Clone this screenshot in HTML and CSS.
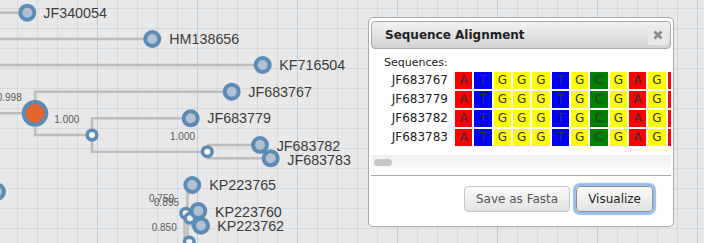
FILE: index.html
```html
<!DOCTYPE html>
<html>
<head>
<meta charset="utf-8">
<title>Sequence Alignment</title>
<link rel="stylesheet" href="styles.css">
</head>
<body>
<div class="stage">
  <svg class="tree" width="704" height="243" viewBox="0 0 704 243">
    <g class="links">
      <path d="M0 12.7H27"/>
      <path d="M0 39H152"/>
      <path d="M0 65H263"/>
      <path d="M0 113.3H35"/>
      <path d="M232 91.7H35V135H92"/>
      <path d="M191 118.3H92V151.7H207"/>
      <path d="M260 145H208V158.3H271"/>
      <path d="M192 185H187.5V243"/>
      <path d="M184.5 213V243"/>
      <path d="M198 211H186"/>
      <path d="M201 225.7H190"/>
    </g>
    <g class="leaf">
      <circle cx="-3" cy="191.7" r="7"/>
      <circle cx="27.3" cy="12.7" r="7"/>
      <circle cx="152.3" cy="39" r="7"/>
      <circle cx="262.7" cy="65" r="7"/>
      <circle cx="231.7" cy="91.7" r="7"/>
      <circle cx="190.7" cy="118.3" r="7"/>
      <circle cx="260" cy="145" r="7"/>
      <circle cx="270.7" cy="158.3" r="7"/>
      <circle cx="192.3" cy="185" r="7"/>
    </g>
    <g class="inner">
      <circle cx="92" cy="135" r="4.8"/>
      <circle cx="207.3" cy="151.7" r="4.8"/>
      <circle cx="185.7" cy="213.3" r="4.8"/>
      <circle cx="190" cy="218.3" r="4.8"/>
      <circle cx="189.3" cy="242" r="4.8"/>
    </g>
    <g class="leaf">
      <circle cx="198.3" cy="211" r="7"/>
      <circle cx="201" cy="225.7" r="7"/>
    </g>
    <circle class="root" cx="35" cy="113.3" r="11.3"/>
    <g class="label">
      <text x="43.3" y="17.7">JF340054</text>
      <text x="169.3" y="44">HM138656</text>
      <text x="279.3" y="70">KF716504</text>
      <text x="248.3" y="96.7">JF683767</text>
      <text x="207.3" y="123.3">JF683779</text>
      <text x="276.7" y="150.7">JF683782</text>
      <text x="287.3" y="165">JF683783</text>
      <text x="209.3" y="190">KP223765</text>
      <text x="215" y="217.3">KP223760</text>
      <text x="217.3" y="230.7">KP223762</text>
    </g>
    <g class="support">
      <text x="-3.3" y="101.3">0.998</text>
      <text x="54.3" y="122.6">1.000</text>
      <text x="170" y="140.3">1.000</text>
      <text x="149" y="202">0.750</text>
      <text x="154" y="206">0.895</text>
      <text x="151.7" y="231.3">0.850</text>
    </g>
  </svg>

  <div class="dialog">
    <div class="titlebar">
      <span class="title">Sequence Alignment</span>
      <button class="close" aria-label="close">
        <svg width="10" height="10" viewBox="0 0 10 10"><path d="M1.5 1.5L8.5 8.5M8.5 1.5L1.5 8.5"/></svg>
      </button>
    </div>
    <div class="content">
      <div class="scroll">
        <div class="hdr">Sequences:</div>
        <div class="rows">
          <div class="row"><span class="name">JF683767</span><div class="cells"><span class="c A">A</span><span class="c T">T</span><span class="c G">G</span><span class="c G">G</span><span class="c G">G</span><span class="c T">T</span><span class="c G">G</span><span class="c C">C</span><span class="c G">G</span><span class="c A">A</span><span class="c G">G</span><span class="c A">A</span></div></div>
          <div class="row"><span class="name">JF683779</span><div class="cells"><span class="c A">A</span><span class="c T">T</span><span class="c G">G</span><span class="c G">G</span><span class="c G">G</span><span class="c T">T</span><span class="c G">G</span><span class="c C">C</span><span class="c G">G</span><span class="c A">A</span><span class="c G">G</span><span class="c A">A</span></div></div>
          <div class="row"><span class="name">JF683782</span><div class="cells"><span class="c A">A</span><span class="c T">T</span><span class="c G">G</span><span class="c G">G</span><span class="c G">G</span><span class="c T">T</span><span class="c G">G</span><span class="c C">C</span><span class="c G">G</span><span class="c A">A</span><span class="c G">G</span><span class="c A">A</span></div></div>
          <div class="row"><span class="name">JF683783</span><div class="cells"><span class="c A">A</span><span class="c T">T</span><span class="c G">G</span><span class="c G">G</span><span class="c G">G</span><span class="c T">T</span><span class="c G">G</span><span class="c C">C</span><span class="c G">G</span><span class="c A">A</span><span class="c G">G</span><span class="c A">A</span></div></div>
        </div>
        <div class="track"><div class="thumb"></div></div>
      </div>
    </div>
    <div class="buttonpane">
      <button class="btn">Save as Fasta</button>
      <button class="btn focus">Visualize</button>
    </div>
  </div>
</div>
</body>
</html>
```

FILE: styles.css
```css
html, body {
  margin: 0;
  padding: 0;
}
body {
  width: 704px;
  height: 243px;
  overflow: hidden;
  font-family: "DejaVu Sans", sans-serif;
}
.stage {
  position: relative;
  width: 704px;
  height: 243px;
  overflow: hidden;
  background-color: #e8e8e8;
  background-image:
    linear-gradient(to right, rgba(150, 185, 215, 0.35) 0, rgba(150, 185, 215, 0.35) 1px, transparent 1px),
    linear-gradient(to right, rgba(170, 195, 220, 0.35) 0, rgba(170, 195, 220, 0.35) 1px, transparent 1px),
    linear-gradient(to bottom, rgba(170, 195, 220, 0.35) 0, rgba(170, 195, 220, 0.35) 1px, transparent 1px);
  background-size: 100px 100%, 20px 20px, 20px 20px;
  background-position: 97px 0, 17px 0, 0 8px;
}
.tree {
  display: block;
}
.links path {
  fill: none;
  stroke: #bdbdbd;
  stroke-width: 2.5;
}
.leaf circle {
  fill: #b3c0d1;
  stroke: #5c8bb6;
  stroke-width: 4;
}
.inner circle {
  fill: #f4f4f4;
  stroke: #5c8bb6;
  stroke-width: 3.5;
}
.root {
  fill: #e4662e;
  stroke: #5c8bb6;
  stroke-width: 4;
}
.label text {
  font-family: "Liberation Sans", Arial, sans-serif;
  font-size: 14.3px;
  fill: #3b3b3b;
}
.support text {
  font-family: "Liberation Sans", Arial, sans-serif;
  font-size: 10px;
  fill: #5a5a5a;
}

.dialog {
  position: absolute;
  left: 368px;
  top: 17px;
  width: 306px;
  box-sizing: border-box;
  border: 1px solid #a9a9a9;
  border-radius: 5px;
  background: #fff;
  padding: 3px 2px;
}
.titlebar {
  display: flex;
  align-items: center;
  justify-content: space-between;
  height: 28px;
  box-sizing: border-box;
  border: 1px solid #aaa;
  border-radius: 4px;
  background: linear-gradient(#f3f3f3, #d2d2d2);
  padding: 0 2px 0 13px;
}
.title {
  font-weight: bold;
  font-size: 12px;
  color: #222;
}
.close {
  width: 20px;
  height: 19px;
  border: 0;
  border-radius: 3px;
  background: #e9e9e9;
  padding: 0;
  display: flex;
  align-items: center;
  justify-content: center;
}
.close svg {
  display: block;
}
.close path {
  stroke: #8a8a8a;
  stroke-width: 2.8;
  fill: none;
}
.content {
  padding: 7px 0 7px;
}
.scroll {
  width: 300px;
  overflow: hidden;
}
.hdr {
  font-size: 11px;
  line-height: 13px;
  padding-left: 13px;
  color: #222;
}
.rows {
  display: flex;
  flex-direction: column;
  gap: 2px;
  margin-top: 3px;
  padding-left: 13px;
}
.row {
  display: flex;
  height: 17px;
  align-items: center;
}
.name {
  flex: none;
  width: 64px;
  margin-right: 7px;
  text-align: right;
  font-size: 12px;
  line-height: 17px;
  color: #222;
}
.cells {
  display: flex;
  flex: none;
  gap: 2px;
}
.c {
  flex: none;
  width: 17.33px;
  height: 17px;
  line-height: 17px;
  text-align: center;
  font-size: 12px;
  color: #333;
}
.A { background: #ff0000; }
.T { background: #0000ff; }
.G { background: #ffff00; }
.C { background: #008000; }
.track {
  margin-top: 9px;
  height: 13px;
  box-sizing: border-box;
  padding: 4px 0 0 3px;
  background: linear-gradient(#efefef, #f9f9f9);
}
.thumb {
  width: 18px;
  height: 7px;
  border-radius: 4px;
  background: #c6c6c6;
}
.buttonpane {
  border-top: 1px solid #a8a8a8;
  padding: 10px 18px 11px 0;
  display: flex;
  justify-content: flex-end;
  gap: 6px;
}
.btn {
  height: 26px;
  box-sizing: border-box;
  border: 1px solid #c6c6c6;
  border-radius: 4px;
  background: linear-gradient(#fbfbfb, #e2e2e2);
  font-family: "DejaVu Sans", sans-serif;
  font-size: 12px;
  color: #555;
  padding: 0 11px;
}
.btn.focus {
  border-color: #8e8e8e;
  color: #222;
  box-shadow: 0 0 1px 3px rgba(115, 170, 232, 0.75);
}
```
